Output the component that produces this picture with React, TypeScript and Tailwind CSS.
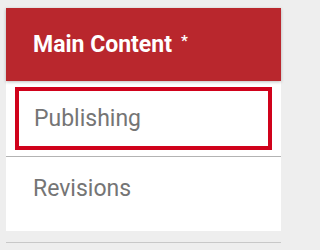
import React from "react";

export default function App() {
  return (
    <div className="min-h-screen w-full bg-[#eeeeee] pt-[8px] px-[6px]" style={{ fontFamily: "Roboto, 'Liberation Sans', sans-serif" }}>
      <div className="w-[275px] bg-white">
        <div className="h-[73px] bg-[#b9272d] flex items-center pl-[27px] shadow-[0_1px_3px_rgba(0,0,0,0.25)] relative">
          <span className="text-white font-bold text-[23px] leading-none">Main Content</span>
          <span className="text-white font-bold text-[15px] leading-none ml-[9px] -mt-[6px]">*</span>
        </div>
        <div className="pt-[6px] pb-[6px] px-[9px]">
          <div className="h-[63px] border-[4px] border-[#d0021b] flex items-center pl-[15px]">
            <span className="text-[#757575] text-[23px] leading-none">Publishing</span>
          </div>
        </div>
        <div className="h-px bg-[#b3b3b3]" />
        <div className="h-[74px] pb-[11px] flex items-center pl-[27px]">
          <span className="text-[#757575] text-[23px] leading-none">Revisions</span>
        </div>
      </div>
      <div className="h-[11px]" />
      <div className="w-[275px] h-px bg-[#c8c8c8]" />
    </div>
  );
}
